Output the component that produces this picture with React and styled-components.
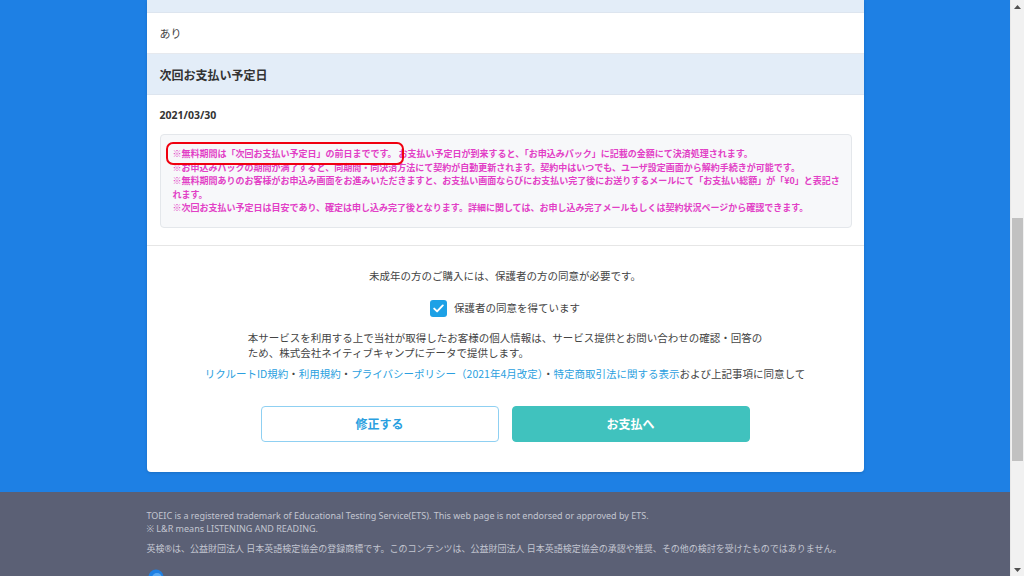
import React from 'react';
import styled, { createGlobalStyle } from 'styled-components';

const GlobalStyle = createGlobalStyle`
  html, body {
    margin: 0;
    padding: 0;
    height: 100%;
    overflow: hidden;
  }
  body {
    font-family: "Noto Sans", "Noto Sans CJK JP", sans-serif;
    color: #333;
  }
`;

const Screen = styled.div`
  display: flex;
  width: 1024px;
  height: 576px;
  overflow: hidden;
`;

const Main = styled.div`
  flex: 1;
  display: flex;
  flex-direction: column;
  background: #1e80e4;
`;

const BlueArea = styled.div`
  padding-bottom: 20px;
`;

const Card = styled.div`
  width: 717px;
  margin: 0 auto;
  background: #fff;
  border-radius: 0 0 4px 4px;
  box-shadow: 0 1px 3px rgba(0, 0, 0, 0.15);
`;

const HeadRow = styled.div`
  height: ${p => p.$h}px;
  box-sizing: border-box;
  display: flex;
  align-items: center;
  padding: 0 13px;
  background: #e3edf8;
  border-bottom: 1px solid #dde5ef;
  font-family: "Noto Sans CJK JP", sans-serif;
  font-size: 12px;
  font-weight: 700;
  color: #333;
`;

const ValueRow = styled.div`
  height: 40px;
  display: flex;
  align-items: center;
  padding: 0 13px;
  font-family: "Noto Sans CJK JP", sans-serif;
  font-size: 11px;
  color: #444;
  border-bottom: 1px solid #e6e9ee;
`;

const DateSection = styled.div`
  padding: 12px 12px 17px 13px;
  border-bottom: 1px solid #e6e6e6;
`;

const DateText = styled.div`
  font-family: "Noto Sans", sans-serif;
  font-size: 10.5px;
  font-weight: 700;
  color: #333;
  line-height: 16px;
  margin-bottom: 11px;
`;

const Notice = styled.div`
  background: #f7f8fa;
  border: 1px solid #e4e7eb;
  border-radius: 4px;
  padding: 12px 4px 12px 12px;
  font-family: "Noto Sans CJK JP", sans-serif;
  font-size: 9px;
  font-weight: 600;
  line-height: 13.5px;
  color: #e23fc6;
`;

const NoWrap = styled.div`
  white-space: nowrap;
`;

const Marked = styled.span`
  outline: 2.5px solid #f0000f;
  outline-offset: 3px;
  border-radius: 2px;
  padding: 0 2px;
  margin-left: -2px;
`;

const Consent = styled.div`
  display: flex;
  flex-direction: column;
  align-items: center;
  padding: 22px 0 30px;
  font-family: "Noto Sans CJK JP", sans-serif;
  font-size: 10.5px;
  color: #444;
`;

const Line = styled.div`
  line-height: 16px;
`;

const CheckRow = styled.label`
  display: flex;
  align-items: center;
  gap: 7px;
  margin-top: 16px;
  line-height: 16px;
`;

const Box = styled.span`
  width: 17px;
  height: 17px;
  border-radius: 3px;
  background: #1da1e6;
  display: flex;
  align-items: center;
  justify-content: center;
`;

const Paragraph = styled.div`
  margin-top: 13px;
  line-height: 15.5px;
  text-align: left;
  white-space: nowrap;
`;

const Links = styled.div`
  margin-top: 5px;
  line-height: 16px;
  white-space: nowrap;
`;

const A = styled.span`
  color: #2b9fe0;
`;

const Buttons = styled.div`
  display: flex;
  gap: 13px;
  margin-top: 24px;
`;

const Button = styled.div`
  width: 238px;
  height: 36px;
  box-sizing: border-box;
  border-radius: 4px;
  display: flex;
  align-items: center;
  justify-content: center;
  font-size: 12px;
  font-weight: 700;
  background: ${p => (p.$primary ? '#40c2be' : '#fff')};
  color: ${p => (p.$primary ? '#fff' : '#2a9fe0')};
  border: 1.5px solid ${p => (p.$primary ? '#40c2be' : '#8fd0f2')};
`;

const Footer = styled.footer`
  flex: 1;
  background: #5b6075;
`;

const FooterInner = styled.div`
  width: 717px;
  margin: 0 auto;
  padding-top: 17px;
  color: #c3c6d1;
  font-family: "Noto Sans", "Noto Sans CJK JP", sans-serif;
  font-size: 9px;
  line-height: 13px;
`;

const FooterNote = styled.div`
  margin-top: 7px;
`;

const Logo = styled.div`
  margin-top: 14px;
  margin-left: 1px;
`;

const Scrollbar = styled.div`
  width: 13px;
  background: #f1f1f1;
  display: flex;
  flex-direction: column;
  align-items: center;
  border-left: 1px solid #e8e8e8;
`;

const Arrow = styled.div`
  height: 13px;
  display: flex;
  align-items: center;
  justify-content: center;
`;

const Track = styled.div`
  flex: 1;
  width: 100%;
  display: flex;
  flex-direction: column;
  padding-top: 205px;
  padding-bottom: 102px;
  box-sizing: border-box;
`;

const Thumb = styled.div`
  flex: 1;
  margin: 0 1px;
  background: #c1c1c1;
`;

export default function App() {
  return (
    <>
      <GlobalStyle />
      <Screen>
        <Main>
          <BlueArea>
            <Card>
              <HeadRow $h={13} />
              <ValueRow>あり</ValueRow>
              <HeadRow $h={41}>次回お支払い予定日</HeadRow>
              <DateSection>
                <DateText>2021/03/30</DateText>
                <Notice>
                  <NoWrap>
                    <Marked>※無料期間は「次回お支払い予定日」の前日までです。</Marked>
                    お支払い予定日が到来すると、「お申込みパック」に記載の金額にて決済処理されます。
                  </NoWrap>
                  <NoWrap>※お申込みパックの期間が満了すると、同期間・同決済方法にて契約が自動更新されます。契約中はいつでも、ユーザ設定画面から解約手続きが可能です。</NoWrap>
                  <NoWrap>※無料期間ありのお客様がお申込み画面をお進みいただきますと、お支払い画面ならびにお支払い完了後にお送りするメールにて「お支払い総額」が「¥0」と表記さ</NoWrap>
                  <NoWrap>れます。</NoWrap>
                  <NoWrap>※次回お支払い予定日は目安であり、確定は申し込み完了後となります。詳細に関しては、お申し込み完了メールもしくは契約状況ページから確認できます。</NoWrap>
                </Notice>
              </DateSection>
              <Consent>
                <Line>未成年の方のご購入には、保護者の方の同意が必要です。</Line>
                <CheckRow>
                  <Box>
                    <svg width="11" height="9" viewBox="0 0 11 9">
                      <path d="M1.2 4.6 L4.1 7.4 L9.8 1.4" fill="none" stroke="#fff" strokeWidth="1.9" strokeLinecap="round" strokeLinejoin="round" />
                    </svg>
                  </Box>
                  保護者の同意を得ています
                </CheckRow>
                <Paragraph>
                  本サービスを利用する上で当社が取得したお客様の個人情報は、サービス提供とお問い合わせの確認・回答の
                  <br />
                  ため、株式会社ネイティブキャンプにデータで提供します。
                </Paragraph>
                <Links>
                  <A>リクルートID規約</A>・<A>利用規約</A>・<A>プライバシーポリシー（2021年4月改定）</A>・<A>特定商取引法に関する表示</A>および上記事項に同意して
                </Links>
                <Buttons>
                  <Button>修正する</Button>
                  <Button $primary>お支払へ</Button>
                </Buttons>
              </Consent>
            </Card>
          </BlueArea>
          <Footer>
            <FooterInner>
              <div>TOEIC is a registered trademark of Educational Testing Service(ETS). This web page is not endorsed or approved by ETS.</div>
              <div>※ L&amp;R means LISTENING AND READING.</div>
              <FooterNote>英検®は、公益財団法人 日本英語検定協会の登録商標です。このコンテンツは、公益財団法人 日本英語検定協会の承認や推奨、その他の検討を受けたものではありません。</FooterNote>
              <Logo>
                <svg width="16" height="16" viewBox="0 0 16 16">
                  <circle cx="8" cy="8" r="7.5" fill="#1e80e4" />
                  <circle cx="9" cy="9" r="5" fill="#5aa8f0" />
                </svg>
              </Logo>
            </FooterInner>
          </Footer>
        </Main>
        <Scrollbar>
          <Arrow>
            <svg width="7" height="4" viewBox="0 0 7 4"><path d="M0 4 L3.5 0 L7 4 Z" fill="#505050" /></svg>
          </Arrow>
          <Track>
            <Thumb />
          </Track>
          <Arrow>
            <svg width="7" height="4" viewBox="0 0 7 4"><path d="M0 0 L3.5 4 L7 0 Z" fill="#505050" /></svg>
          </Arrow>
        </Scrollbar>
      </Screen>
    </>
  );
}
